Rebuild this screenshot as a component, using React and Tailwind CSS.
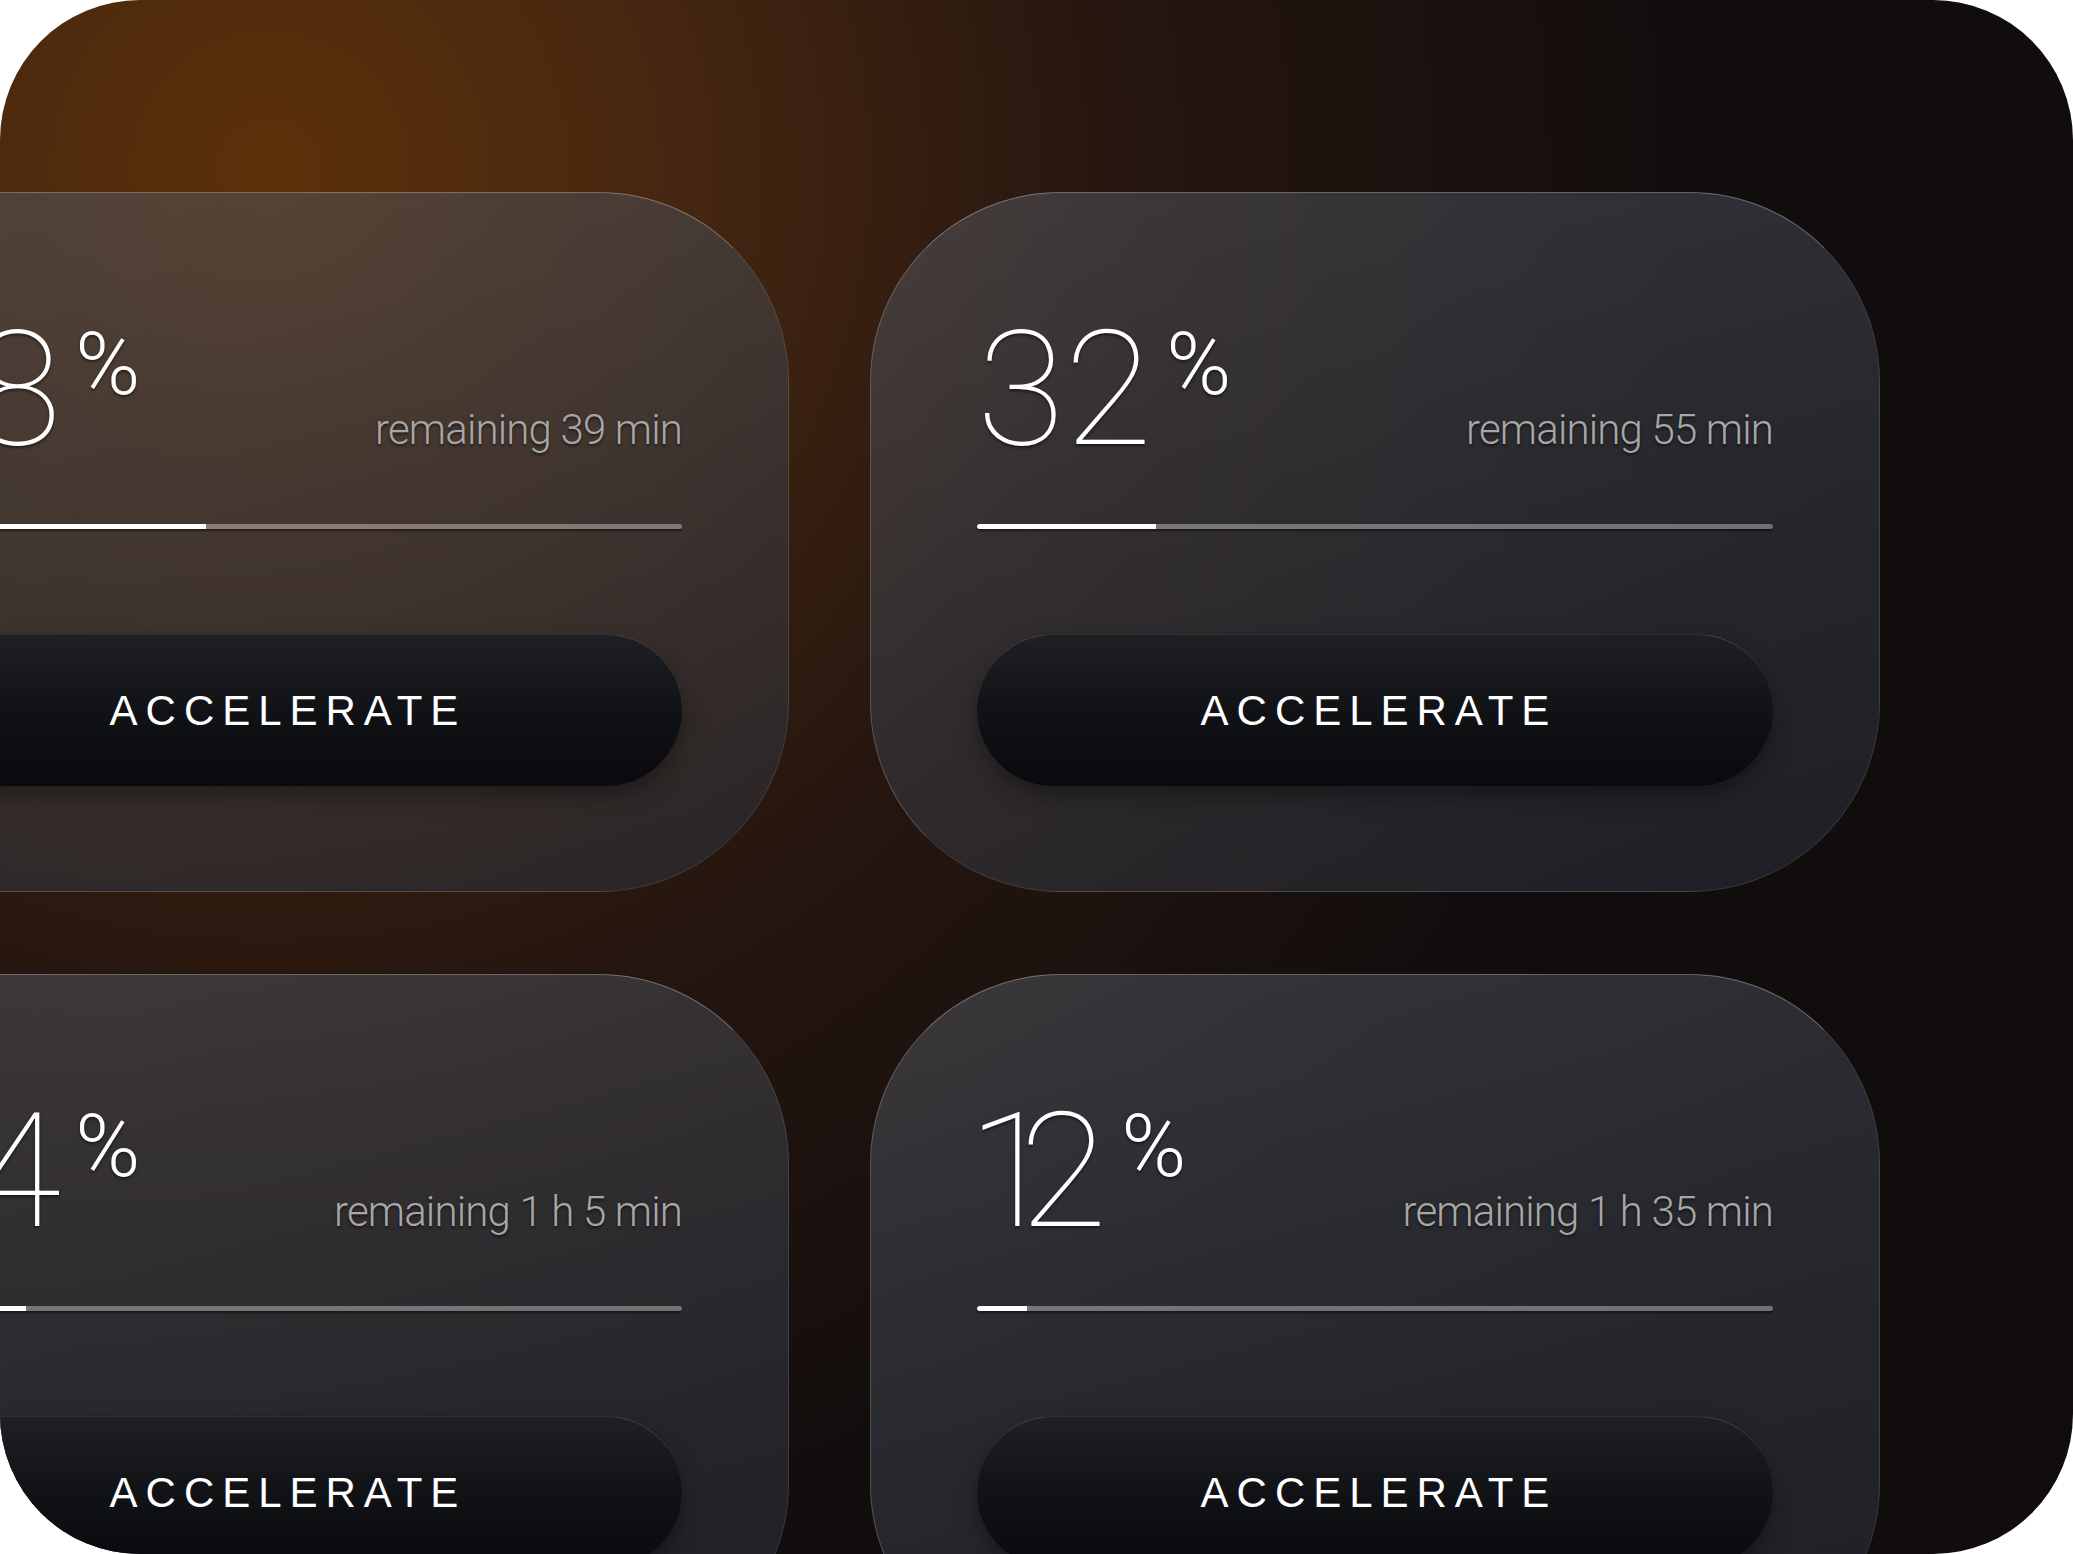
import React from "react";

const cards = [
  { num: "48", rem: "remaining 39 min", fill: "40.2%" },
  { num: "32", rem: "remaining 55 min", fill: "22.5%" },
  { num: "24", rem: "remaining 1 h 5 min", fill: "17.6%" },
  { num: "12", rem: "remaining 1 h 35 min", fill: "6.3%" },
];

function Digits({ value }) {
  return (
    <span className="flex">
      {value.split("").map((d, i) =>
        d === "1" ? (
          <span key={i} className="ml-[-9px] mr-[-36px]">
            1
          </span>
        ) : (
          <span key={i}>{d}</span>
        )
      )}
    </span>
  );
}

function Card({ num, rem, fill }) {
  return (
    <div className="h-[700px] rounded-[190px] border-[1.5px] border-t-white/30 border-l-white/20 border-r-white/10 border-b-white/10 bg-[linear-gradient(165deg,rgba(86,92,102,0.5)_0%,rgba(64,70,80,0.5)_45%,rgba(44,49,59,0.52)_100%)] px-[106px] pt-[117px] pb-[105px] flex flex-col font-['Roboto','Inter',sans-serif]">
      <div className="flex items-baseline justify-between">
        <div className="flex items-start">
          <span className="text-[160px] leading-none font-thin text-white [text-shadow:0_2px_3px_rgba(0,0,0,0.5)]">
            <Digits value={num} />
          </span>
          <span className="ml-[14px] mt-[10px] text-[88px] leading-none font-light text-white [text-shadow:0_2px_3px_rgba(0,0,0,0.5)]">
            %
          </span>
        </div>
        <span className="text-[42px] leading-none font-light tracking-[-0.02em] text-[#a7a7a7] [text-shadow:0_2px_3px_rgba(0,0,0,0.55)]">
          {rem}
        </span>
      </div>
      <div className="mt-[54px] h-[5px] rounded-full bg-white/35 shadow-[0_2px_2px_rgba(0,0,0,0.45)] flex overflow-hidden">
        <div className="h-full bg-white rounded-l-full" style={{ width: fill }} />
      </div>
      <button className="mt-[105px] h-[152px] w-full rounded-full border-t-[1.5px] border-white/15 bg-[linear-gradient(180deg,#1f2024_0%,#111216_50%,#090a0d_100%)] shadow-[0_10px_22px_rgba(0,0,0,0.35)] flex items-center justify-center">
        <span className="font-['Liberation_Sans','Arial',sans-serif] text-[42px] leading-none text-white tracking-[0.19em] pl-[0.19em]">
          ACCELERATE
        </span>
      </button>
    </div>
  );
}

export default function App() {
  return (
    <div className="w-[2073px] h-[1554px] bg-white">
      <div className="w-full h-full rounded-[140px] overflow-hidden bg-[radial-gradient(circle_at_270px_170px,#5c3109_0px,#462711_400px,#26160f_850px,#130e0e_1400px,#110d0d_1800px)]">
        <div className="ml-[-221px] pt-[192px] grid grid-cols-[1010px_1010px] gap-x-[81px] gap-y-[82px] w-max">
          {cards.map((c, i) => (
            <Card key={i} {...c} />
          ))}
        </div>
      </div>
    </div>
  );
}
